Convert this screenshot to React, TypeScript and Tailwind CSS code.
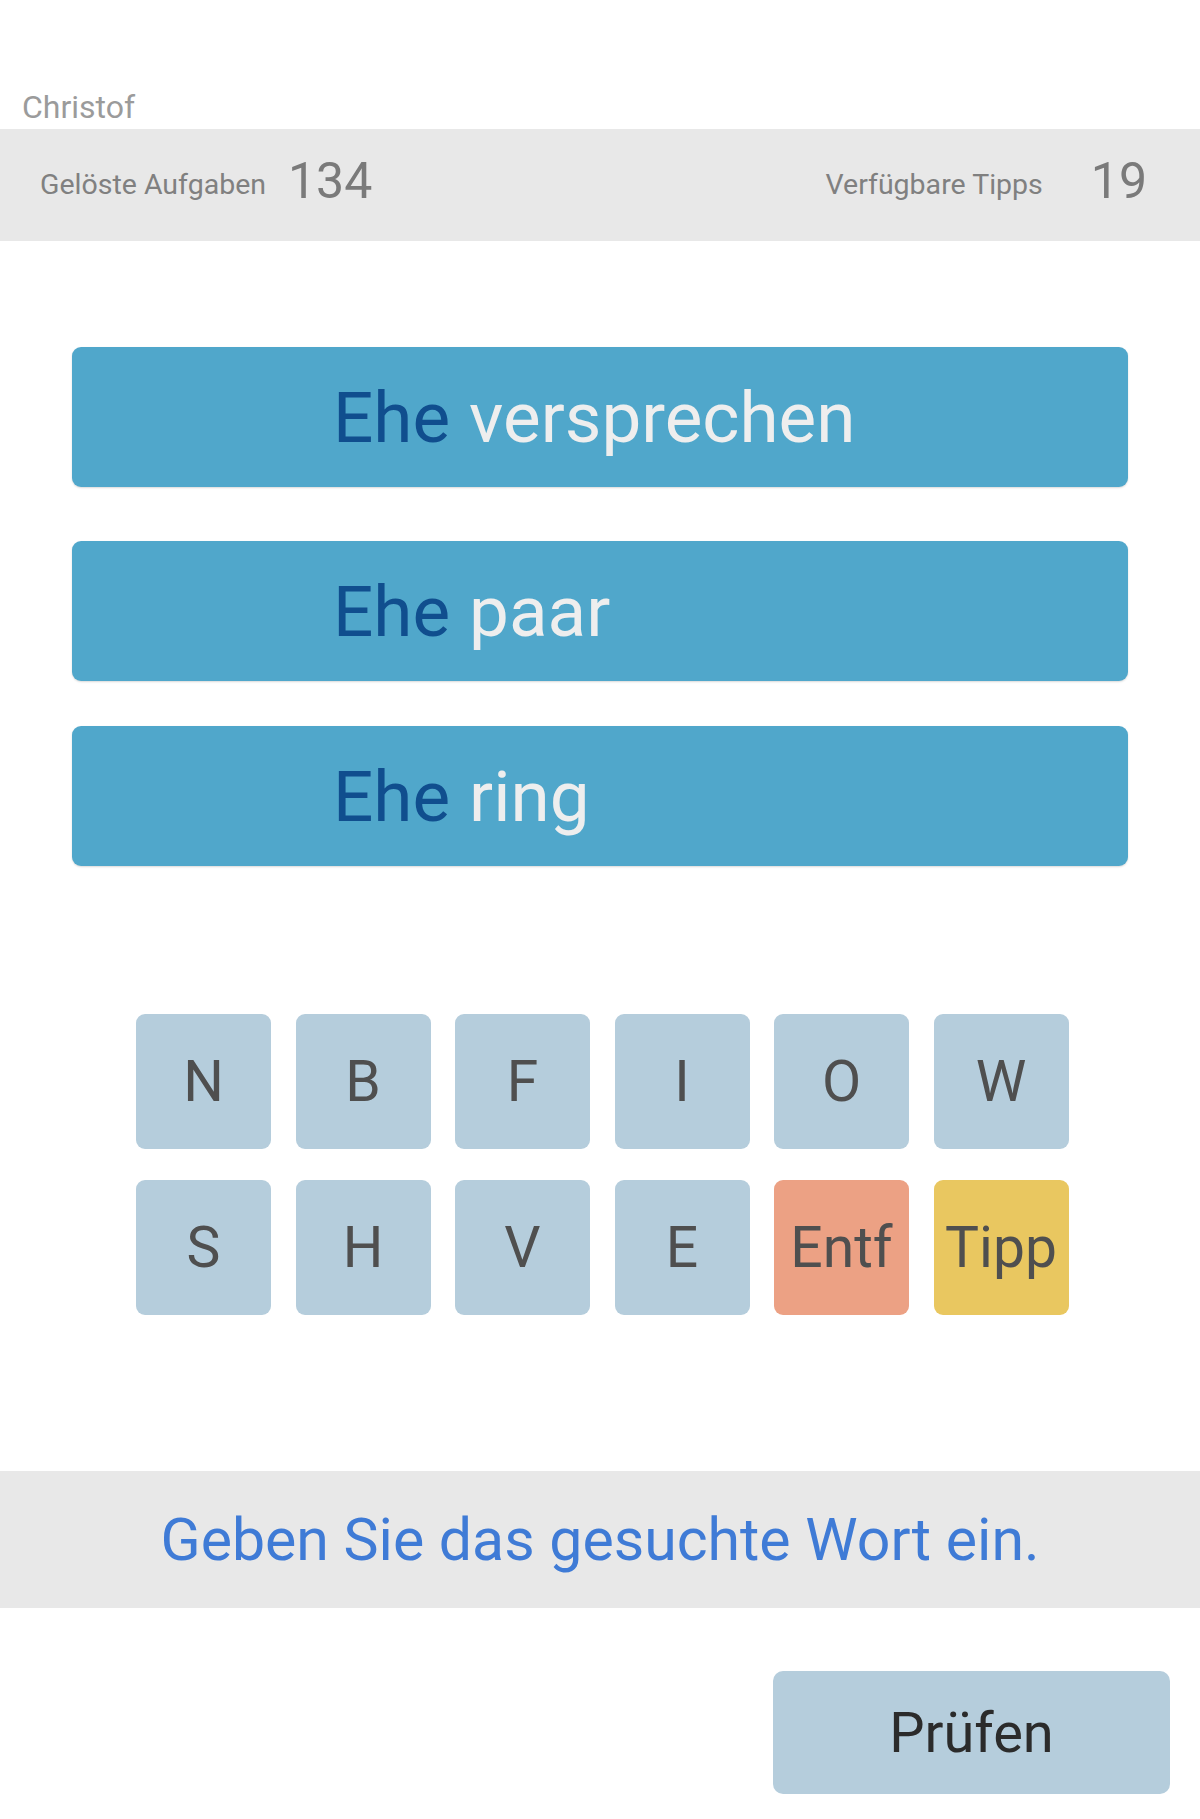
const keys: { label: string; tone: 'plain' | 'del' | 'tip' }[] = [
  { label: 'N', tone: 'plain' },
  { label: 'B', tone: 'plain' },
  { label: 'F', tone: 'plain' },
  { label: 'I', tone: 'plain' },
  { label: 'O', tone: 'plain' },
  { label: 'W', tone: 'plain' },
  { label: 'S', tone: 'plain' },
  { label: 'H', tone: 'plain' },
  { label: 'V', tone: 'plain' },
  { label: 'E', tone: 'plain' },
  { label: 'Entf', tone: 'del' },
  { label: 'Tipp', tone: 'tip' },
];

const clues = ['versprechen', 'paar', 'ring'];

function ClueBar({ word, className }: { word: string; className?: string }) {
  return (
    <div
      className={`mx-[72px] h-[140px] rounded-[9px] bg-[#50a7cb] flex items-center pl-[261px] text-[71px] leading-none shadow-[0_1px_2px_rgba(0,0,0,0.15)] ${className ?? ''}`}
    >
      <span className="text-[#104e8e]">Ehe</span>
      <span className="text-[#eeeeee] ml-[19px]">{word}</span>
    </div>
  );
}

export default function App() {
  return (
    <div
      className="w-[1200px] h-[1819px] bg-white flex flex-col overflow-hidden"
      style={{ fontFamily: 'Roboto, "Noto Sans", sans-serif' }}
    >
      {/* user name */}
      <div className="pt-[88px] pb-[3px] pl-[22px] text-[32px] leading-[38px] text-[#9b9b9b]">Christof</div>

      {/* stats bar */}
      <div className="h-[112px] bg-[#e8e8e8] flex items-center justify-between pl-[40px] pr-[53px]">
        <div className="flex items-center gap-[22px]">
          <span className="text-[28.5px] text-[#808080]">Gelöste Aufgaben</span>
          <span className="text-[50px] leading-none text-[#7a7a7a] mb-[8px]">134</span>
        </div>
        <div className="flex items-center gap-[48px]">
          <span className="text-[28.5px] text-[#808080]">Verfügbare Tipps</span>
          <span className="text-[50px] leading-none text-[#7a7a7a] mb-[8px]">19</span>
        </div>
      </div>

      {/* clue bars */}
      <ClueBar word={clues[0]} className="mt-[106px]" />
      <ClueBar word={clues[1]} className="mt-[54px]" />
      <ClueBar word={clues[2]} className="mt-[45px]" />

      {/* letter keys */}
      <div className="mt-[148px] ml-[136px] grid grid-cols-[repeat(6,135px)] gap-x-[24.5px] gap-y-[31px]">
        {keys.map(k => (
          <div
            key={k.label}
            className={`h-[135px] rounded-[9px] flex items-center justify-center text-[57px] leading-none text-[#4f4f4f] ${
              k.tone === 'del' ? 'bg-[#eca184]' : k.tone === 'tip' ? 'bg-[#e9c760]' : 'bg-[#b5cddc]'
            }`}
          >
            {k.label}
          </div>
        ))}
      </div>

      {/* hint */}
      <div className="mt-[156px] h-[137px] bg-[#e8e8e8] flex items-center justify-center text-[59px] leading-none text-[#3f7bd6]">
        Geben Sie das gesuchte Wort ein.
      </div>

      {/* submit */}
      <div className="mt-[63px] flex justify-end pr-[30px]">
        <button className="w-[397px] h-[123px] rounded-[10px] bg-[#b5cddc] text-[56px] leading-none text-[#2b2b2b] flex items-center justify-center">
          Prüfen
        </button>
      </div>
    </div>
  );
}
